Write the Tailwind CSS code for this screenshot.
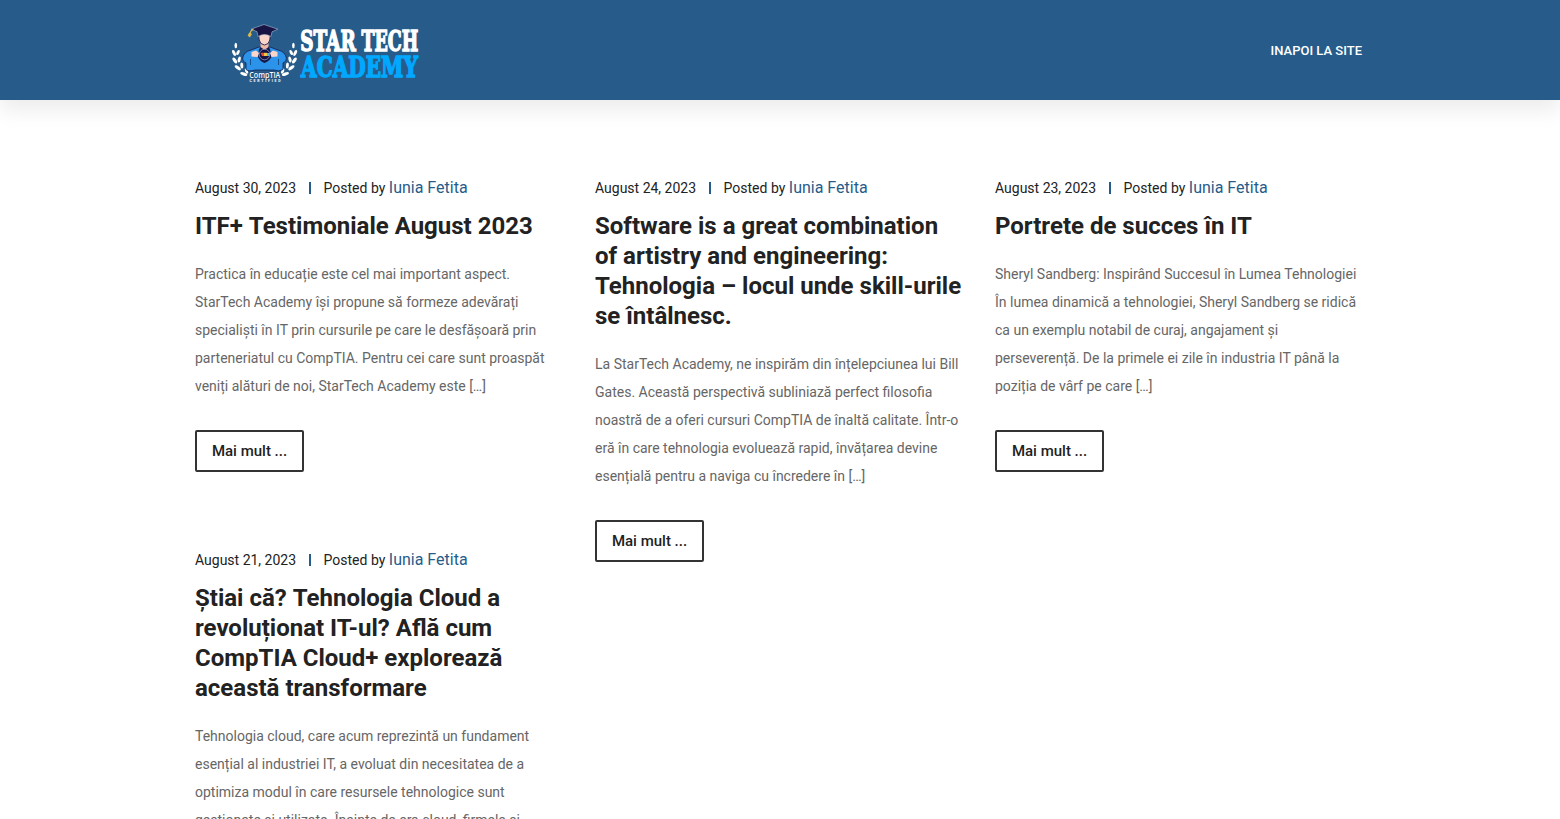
<!DOCTYPE html>
<html lang="ro">
<head>
<meta charset="utf-8">
<title>StarTech Academy</title>
<script src="https://cdn.jsdelivr.net/npm/@tailwindcss/browser@4"></script>
</head>
<body class="h-[819px] overflow-hidden bg-white font-['Roboto',sans-serif] text-[14px] text-[#222]">
<header class="relative h-[100px] bg-[#275c8a] shadow-[0_10px_20px_0_rgba(0,0,0,0.08)]">
  <div class="mx-auto flex h-full w-[1170px] items-start justify-between pr-[3px]">
    <a class="mt-[15px] ml-[30px] block h-[75px] w-[205px]">
      <svg class="overflow-visible" width="205" height="75" viewBox="225 15 205 75">
        <!-- laurel branches -->
        <g fill="#fff">
          <g id="laurel">
            <ellipse cx="235.800" cy="45.500" rx="1.300" ry="2.700"/>
            <ellipse cx="234" cy="53" rx="1.500" ry="3.200" transform="rotate(-24 234 53)"/>
            <ellipse cx="238" cy="52.500" rx="1.400" ry="2.800" transform="rotate(28 238 52.500)"/>
            <ellipse cx="234.800" cy="60.500" rx="1.600" ry="3.300" transform="rotate(-36 234.800 60.500)"/>
            <ellipse cx="239.200" cy="59.500" rx="1.500" ry="3" transform="rotate(16 239.200 59.500)"/>
            <ellipse cx="237.800" cy="67.800" rx="1.600" ry="3.600" transform="rotate(-52 237.800 67.800)"/>
            <ellipse cx="241.800" cy="65.500" rx="1.500" ry="3" transform="rotate(-4 241.800 65.500)"/>
            <ellipse cx="243.800" cy="74" rx="1.600" ry="3.700" transform="rotate(-70 243.800 74)"/>
            <ellipse cx="246.500" cy="71" rx="1.400" ry="2.800" transform="rotate(-22 246.500 71)"/>
          </g>
          <use href="#laurel" transform="translate(529.200 0) scale(-1 1)"/>
        </g>
        <!-- graduate -->
        <path d="M246 69.500V63Q242 61.500 242.600 58Q244 51.500 251 50L259 47H270L278 50Q285 51.500 286.400 58Q287 61.500 283 63V69.500Q279 72 274 70H255Q249 72 246 69.500Z" fill="#2b93ea" stroke="#171e50" stroke-width=".8"/>
        <path d="M259 49.500 261 46H268.500L270 49.500 271.500 57Q269 61.500 264.500 63Q260 61.500 258 57Z" fill="#15184b"/>
        <path d="M260.500 42H268.500V47L264.500 50 260.500 47Z" fill="#edb7a5"/>
        <path d="M258.500 33H270.500L269.800 40Q269 44.500 264.500 45Q260 44.500 259.200 40Z" fill="#fbd5ca" stroke="#201c49" stroke-width=".9"/>
        <path d="M251 29.200 264 24.500 277.800 29.200 272 31.800 271 36.500Q264.500 32.500 258 36.500L257 31.600Z" fill="#171443" stroke="#a9bbd3" stroke-width=".6"/>
        <path d="M253.500 29.300Q250.500 30 250 34" fill="none" stroke="#dcb84a" stroke-width="1.200"/>
        <path d="M249.300 32.500 252 34 249.800 37.500 247.600 35.500Z" fill="#dcb84a"/>
        <circle cx="264.500" cy="54.500" r="5.300" fill="#171443" stroke="#9fa9cf" stroke-width=".7"/>
        <path d="M260.500 52.800H264V56H262Z" fill="#e94e3d"/>
        <path d="M264 52.800H267V56H264Z" fill="#f4c543"/>
        <path d="M267 53H269.500V56H267Z" fill="#58b4ec"/>
        <path d="M251.500 52 256 50.600 259 53 257.500 57 251.500 56.500Z" fill="#fbd5ca"/>
        <path d="M277.500 52 273 50.600 270 53 271.500 57 277.500 56.500Z" fill="#fbd5ca"/>
        <path d="M250.500 59V65M278.500 59V65" stroke="#16508d"/>
        <text x="249.300" y="77.500" font-family="Open Sans, sans-serif" font-size="8.600" font-weight="600" fill="#fff" stroke="#1d4777" stroke-width="1" paint-order="stroke" textLength="31" lengthAdjust="spacingAndGlyphs">CompTIA</text>
        <text x="249.500" y="82" font-family="Roboto, sans-serif" font-size="3.600" font-weight="900" fill="#e9f0f8" textLength="31">CERTIFIED</text>
        <!-- wordmark -->
        <g font-family="DejaVu Serif, serif" font-weight="700" font-size="28" stroke-width="1.500">
          <text x="300.300" y="51.200" fill="#fff" stroke="#fff" textLength="55.500" lengthAdjust="spacingAndGlyphs">STAR</text>
          <text x="361.500" y="51.200" fill="#fff" stroke="#fff" textLength="56.700" lengthAdjust="spacingAndGlyphs">TECH</text>
          <text x="301" y="76.700" fill="#00a8ff" stroke="#00a8ff" textLength="116.800" lengthAdjust="spacingAndGlyphs">ACADEMY</text>
        </g>
      </svg>
    </a>
    <a class="mt-[41px] text-[13px] font-medium leading-5 text-white">INAPOI LA SITE</a>
  </div>
</header>

<main class="mx-auto flex w-[1170px] items-start gap-[30px] pt-[74px] whitespace-nowrap">
  <div class="flex w-[370px] flex-col gap-[74px]">
    <article>
      <div class="flex h-[27px] items-center"><span class="pt-0.5">August 30, 2023</span><i class="mr-[12.5px] ml-[13px] h-3 w-0.5 bg-[#275c8a]"></i><span>Posted by <a class="text-[16px] text-[#275c8a]">Iunia Fetita</a></span></div>
      <h2 class="mt-[10px] text-[24px] leading-[30px] font-bold">ITF+ <span class="ml-[0.1px]">Testimoniale August 2023</span></h2>
      <p class="mt-[19px] leading-7 text-[#666]">Practica în educație este cel mai important aspect.<br>StarTech Academy își propune să formeze adevărați<br>specialiști în IT prin cursurile pe care le desfășoară prin<br>parteneriatul cu CompTIA. Pentru cei care sunt proaspăt<br>veniți alături de noi, StarTech Academy este […]</p>
      <a class="mt-[30px] flex h-[42px] w-[109px] items-center justify-center rounded-[2px] border-2 border-[#333] text-[15px] font-medium">Mai mult ...</a>
    </article>
    <article>
      <div class="flex h-[27px] items-center"><span class="pt-0.5">August 21, 2023</span><i class="mr-[12.5px] ml-[13px] h-3 w-0.5 bg-[#275c8a]"></i><span>Posted by <a class="text-[16px] text-[#275c8a]">Iunia Fetita</a></span></div>
      <h2 class="mt-[10px] text-[24px] leading-[30px] font-bold">Știai că? <span class="ml-[0.1px]">Tehnologia Cloud a</span><br>revoluționat IT-ul? Află cum<br>CompTIA Cloud+ explorează<br>această transformare</h2>
      <p class="mt-[19px] leading-7 text-[#666]">Tehnologia cloud, care acum reprezintă un fundament<br>esențial al industriei IT, a evoluat din necesitatea de a<br>optimiza modul în care resursele tehnologice sunt<br>gestionate și utilizate. Înainte de era cloud, firmele și</p>
    </article>
  </div>
  <article class="w-[370px]">
    <div class="flex h-[27px] items-center"><span class="pt-0.5">August 24, 2023</span><i class="mr-[12.5px] ml-[13px] h-3 w-0.5 bg-[#275c8a]"></i><span>Posted by <a class="text-[16px] text-[#275c8a]">Iunia Fetita</a></span></div>
    <h2 class="mt-[10px] text-[24px] leading-[30px] font-bold">Software is a great combination<br>of artistry and engineering:<br>Tehnologia – locul unde skill-urile<br>se întâlnesc.</h2>
    <p class="mt-[19px] leading-7 text-[#666]">La StarTech Academy, ne inspirăm din înțelepciunea lui Bill<br>Gates. Această perspectivă subliniază perfect filosofia<br>noastră de a oferi cursuri CompTIA de înaltă calitate. Într-o<br>eră în care tehnologia evoluează rapid, învățarea devine<br>esențială pentru a naviga cu încredere în […]</p>
    <a class="mt-[30px] flex h-[42px] w-[109px] items-center justify-center rounded-[2px] border-2 border-[#333] text-[15px] font-medium">Mai mult ...</a>
  </article>
  <article class="w-[370px]">
    <div class="flex h-[27px] items-center"><span class="pt-0.5">August 23, 2023</span><i class="mr-[12.5px] ml-[13px] h-3 w-0.5 bg-[#275c8a]"></i><span>Posted by <a class="text-[16px] text-[#275c8a]">Iunia Fetita</a></span></div>
    <h2 class="mt-[10px] text-[24px] leading-[30px] font-bold">Portrete de succes în IT</h2>
    <p class="mt-[19px] leading-7 text-[#666]">Sheryl Sandberg: Inspirând Succesul în Lumea Tehnologiei<br>În lumea dinamică a tehnologiei, Sheryl Sandberg se ridică<br>ca un exemplu notabil de curaj, angajament și<br>perseverență. De la primele ei zile în industria IT până la<br>poziția de vârf pe care […]</p>
    <a class="mt-[30px] flex h-[42px] w-[109px] items-center justify-center rounded-[2px] border-2 border-[#333] text-[15px] font-medium">Mai mult ...</a>
  </article>
</main>
</body>
</html>
